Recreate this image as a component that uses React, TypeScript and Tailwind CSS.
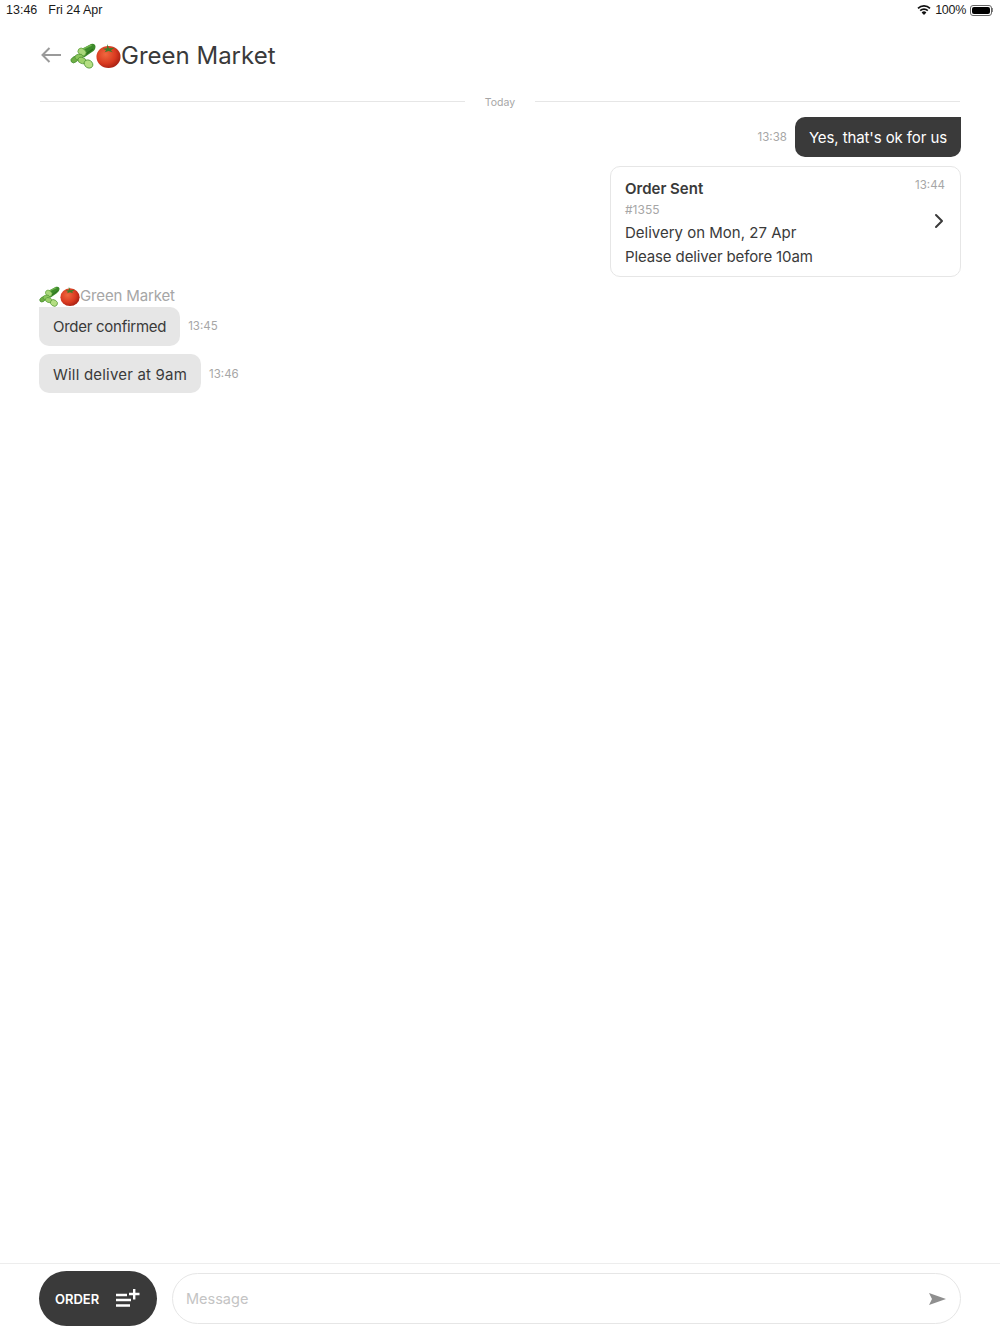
import React from 'react';
import { ChevronRight } from 'lucide-react';

const font = "font-['Inter',sans-serif]";

// veg emoji pair, drawn because no colour emoji font is around
const Cucumber: React.FC<{ size: number }> = ({ size }) => (
  <svg width={size} height={size} viewBox="0 0 26 26">
    <path d="M21 1 Q25 0 25.5 3.5 Q25.5 7 22 9 L14 14.5 L8.5 8 Z" fill="#3c8a2a" />
    <path d="M12 6.5 L21.5 2" stroke="#6fb24e" strokeWidth="1.6" />
    <path d="M16 11 L23 6" stroke="#2c6f1f" strokeWidth="1.2" />
    <ellipse cx="12" cy="9" rx="4.4" ry="3.4" fill="#a9d77a" stroke="#5c9e38" strokeWidth="0.7" transform="rotate(40 12 9)" />
    <ellipse cx="4.6" cy="16.5" rx="4" ry="2.8" fill="#6fae45" stroke="#3f8a2c" strokeWidth="0.7" transform="rotate(-35 4.6 16.5)" />
    <ellipse cx="9" cy="14" rx="4" ry="2.8" fill="#8cc65c" stroke="#4d9330" strokeWidth="0.7" transform="rotate(-10 9 14)" />
    <ellipse cx="12" cy="17.5" rx="4.2" ry="3" fill="#9dd06a" stroke="#4d9330" strokeWidth="0.7" transform="rotate(20 12 17.5)" />
    <ellipse cx="18.5" cy="21" rx="4.6" ry="3.8" fill="#b4de82" stroke="#4d9330" strokeWidth="0.8" transform="rotate(35 18.5 21)" />
  </svg>
);

const Tomato: React.FC<{ size: number }> = ({ size }) => (
  <svg width={size} height={size} viewBox="0 0 26 26" className="-mt-[2px]">
    <defs>
      <radialGradient id="tomato" cx="38%" cy="38%" r="70%">
        <stop offset="0%" stopColor="#f0683f" />
        <stop offset="60%" stopColor="#d93a20" />
        <stop offset="100%" stopColor="#a01c10" />
      </radialGradient>
    </defs>
    <ellipse cx="13" cy="14.5" rx="12.5" ry="11.5" fill="url(#tomato)" />
    <path d="M7 6 L11.5 5.5 L11.5 1 L13.5 5.5 L19.5 5 L15.5 7.5 L17.5 9.5 L13 8.2 L9 9.5 L10.5 7.5 Z" fill="#3f7d2a" />
  </svg>
);

const Time: React.FC<{ children: React.ReactNode; className?: string }> = ({ children, className }) => (
  <span className={`block text-[11.5px] leading-none text-[#a6a6a6] ${className ?? ''}`}>{children}</span>
);

const App: React.FC = () => {
  return (
    <div className={`${font} w-[1000px] h-[1334px] bg-white flex flex-col text-[#3a3a3a] overflow-hidden`}>
      {/* status bar */}
      <div className="h-[20px] pl-[6px] pr-[7px] flex items-center justify-between font-['Liberation_Sans',sans-serif] text-[#1a1a1a]">
        <div className="flex gap-[11px] text-[12.5px]">
          <span>13:46</span>
          <span>Fri 24 Apr</span>
        </div>
        <div className="flex items-center gap-[4px] text-[12.5px]">
          <svg width="14" height="10" viewBox="0 0 14 10">
            <path d="M7 10 L4.6 7.4 A3.4 3.4 0 0 1 9.4 7.4 Z" fill="#111" />
            <path d="M3.2 5.6 A5.4 5.4 0 0 1 10.8 5.6" stroke="#111" strokeWidth="1.7" fill="none" />
            <path d="M1 3.4 A8.4 8.4 0 0 1 13 3.4" stroke="#111" strokeWidth="1.7" fill="none" />
          </svg>
          <span className="tracking-[-0.3px]">100%</span>
          <div className="flex items-center">
            <div className="w-[22px] h-[11px] rounded-[3px] border border-[#666] p-[1px]">
              <div className="w-full h-full rounded-[2px] bg-black" />
            </div>
            <div className="w-[1px] h-[4px] bg-[#888]" />
          </div>
        </div>
      </div>

      {/* header */}
      <div className="h-[50px] mt-[11px] pl-[41px] flex items-center">
        <svg width="20" height="16" viewBox="0 0 20 16" fill="none" stroke="#9a9a9a" strokeWidth="2" className="-mt-[2px]">
          <path d="M20 8 H1.5 M8.5 1 L1.5 8 L8.5 15" />
        </svg>
        <div className="ml-[9px] flex items-center">
          <Cucumber size={26} />
          <Tomato size={25} />
        </div>
        <span className="text-[24px] leading-none">Green Market</span>
      </div>

      {/* chat */}
      <div className="flex-1 px-[39px] pt-[11px]">
        <div className="mx-[1px] h-[18px] flex items-center">
          <div className="flex-1 h-px bg-[#e6e6e6]" />
          <span className="w-[70px] mt-[3px] text-center text-[10.5px] text-[#a6a6a6]">Today</span>
          <div className="flex-1 h-px bg-[#e6e6e6]" />
        </div>

        <div className="mt-[7px] flex justify-end items-center gap-[8px]">
          <Time className="mt-[2px]">13:38</Time>
          <div className="h-[40px] px-[14px] pt-[3px] flex items-center rounded-[10px] rounded-tr-none bg-[#3a3a3a] text-white text-[15px] tracking-[-0.1px]">
            Yes, that's ok for us
          </div>
        </div>

        <div className="mt-[9px] flex justify-end">
          <div className="relative w-[351px] h-[111px] rounded-[10px] border border-[#e6e6e6] px-[14px] pt-[12px]">
            <div className="text-[15px] leading-[20px] font-semibold">Order Sent</div>
            <div className="text-[12px] leading-[16px] mt-[3px] text-[#a6a6a6]">#1355</div>
            <div className="text-[15px] leading-[24px] mt-[3px]">Delivery on Mon, 27 Apr</div>
            <div className="text-[15px] leading-[24px] tracking-[-0.12px]">Please deliver before 10am</div>
            <div className="absolute top-[13px] right-[15px]">
              <Time>13:44</Time>
            </div>
            <ChevronRight size={24} strokeWidth={2} className="absolute top-[42px] right-[9px] text-[#3a3a3a]" />
          </div>
        </div>

        <div className="mt-[9px] h-[21px] flex items-center text-[15px] text-[#a6a6a6] tracking-[-0.15px]">
          <Cucumber size={21} />
          <Tomato size={20} />
          <span>Green Market</span>
        </div>
        <div className="flex items-center gap-[8px]">
          <div className="h-[39px] px-[14px] pt-[1px] flex items-center rounded-[10px] rounded-tl-none bg-[#e6e6e6] text-[15px] tracking-[-0.27px]">
            Order confirmed
          </div>
          <Time className="mt-[1px]">13:45</Time>
        </div>
        <div className="mt-[8px] flex items-center gap-[8px]">
          <div className="h-[39px] px-[14px] pt-[3px] flex items-center rounded-[10px] bg-[#e6e6e6] text-[15px] tracking-[0.2px]">
            Will deliver at 9am
          </div>
          <Time className="mt-[2px]">13:46</Time>
        </div>
      </div>

      {/* bottom bar */}
      <div className="h-[71px] border-t border-[#ededed] px-[39px] flex items-start pt-[7px] gap-[15px]">
        <div className="w-[118px] h-[55px] rounded-full bg-[#3a3a3a] text-white flex items-center pl-[16px] gap-[17px]">
          <span className="text-[13px] font-semibold mt-[2px]">ORDER</span>
          <svg width="24" height="20" viewBox="0 0 24 20" fill="none" stroke="#fff" strokeWidth="2.4" className="mt-[-1px]">
            <path d="M0 7 H11 M0 12 H15 M0 17.5 H14 M13 6 H23.5 M18.2 1 V11.5" />
          </svg>
        </div>
        <div className="flex-1 mt-[2px] h-[51px] rounded-full border border-[#e6e6e6] pl-[13px] pr-[14px] flex items-center justify-between">
          <span className="text-[14.5px] text-[#c4c4c4] mt-[1px]">Message</span>
          <svg width="17" height="12" viewBox="0 0 17 12" fill="#8f8f8f">
            <path d="M0 0 L17 6 L0 12 L3 6 Z" />
          </svg>
        </div>
      </div>
    </div>
  );
};

export default App;
